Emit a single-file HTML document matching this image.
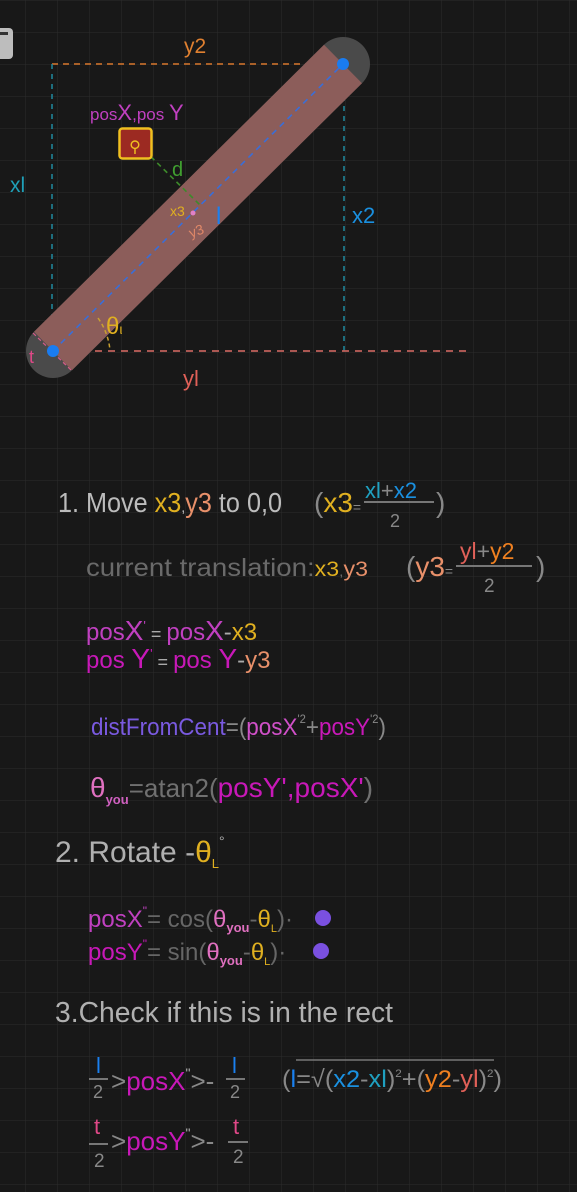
<!DOCTYPE html>
<html><head><meta charset="utf-8"><style>
html,body{margin:0;padding:0;background:#181818;}
svg{display:block;}
text{font-family:"Liberation Sans",sans-serif;}
</style></head><body>
<svg width="577" height="1192" viewBox="0 0 577 1192" xmlns="http://www.w3.org/2000/svg">
<defs>
<pattern id="g" x="25" y="0" width="32" height="32" patternUnits="userSpaceOnUse">
<path d="M0 0V32M0 0H32" stroke="#2c2c2c" stroke-width="1" fill="none"/>
</pattern>
</defs>
<rect width="577" height="1192" fill="#181818"/>
<rect width="577" height="1192" fill="url(#g)"/>
<rect x="-6" y="28" width="19" height="31" rx="4" fill="#bdbdbd"/>
<rect x="-2" y="32" width="10" height="3" fill="#333"/>

<path d="M52 64H343" stroke="#d9782d" stroke-width="1.5" stroke-dasharray="6 5"/>
<path d="M52 64V351" stroke="#1f8aa0" stroke-width="1.5" stroke-dasharray="5 5"/>
<path d="M344 66V351" stroke="#1f8aa0" stroke-width="1.5" stroke-dasharray="5 5"/>
<path d="M56 351H468" stroke="#c0605a" stroke-width="1.8" stroke-dasharray="7 6"/>

<line x1="53" y1="351" x2="343" y2="64" stroke="#4a4a4a" stroke-width="54" stroke-linecap="round"/>
<line x1="53" y1="351" x2="343" y2="64" stroke="#8c5d5a" stroke-width="54"/>
<path d="M33 333L73 372" stroke="#d65a8a" stroke-width="1.2" stroke-dasharray="4 3"/>
<line x1="53" y1="351" x2="343" y2="64" stroke="#3a6ed8" stroke-width="1.6" stroke-dasharray="6 5"/>
<circle cx="53" cy="351" r="6" fill="#1a7cf0"/>
<circle cx="343" cy="64" r="6" fill="#1a7cf0"/>
<circle cx="193" cy="213" r="2.5" fill="#e080c8"/>
<path d="M138 144L200 205" stroke="#3d8a2a" stroke-width="1.6" stroke-dasharray="5 4"/>
<path d="M98 318Q108 332 110 350" stroke="#c9a030" stroke-width="1.5" stroke-dasharray="4 3" fill="none"/>

<rect x="119.5" y="128.5" width="32" height="30" rx="3" fill="#9c2a22" stroke="#f0c020" stroke-width="2.5"/>
<text x="135" y="152" font-size="16" fill="#f0c020" text-anchor="middle">⚲</text>

<text x="184" y="53" font-size="21" fill="#e08030">y2</text>
<text x="90" y="120" font-size="17" fill="#c040c0">pos<tspan font-size="22">X</tspan>,pos <tspan font-size="22">Y</tspan></text>
<text x="10" y="192" font-size="21" fill="#1fa0b8">xl</text>
<text x="172" y="176" font-size="20" fill="#40a030">d</text>
<text x="170" y="216" font-size="14" fill="#e0b020">x3</text>
<text x="191" y="238" font-size="14" fill="#e08868" transform="rotate(-20 191 238)">y3</text>
<text x="216" y="224" font-size="24" fill="#1a80f0">l</text>
<text x="352" y="223" font-size="22" fill="#1a90e0">x2</text>
<text x="106" y="334" font-size="24" fill="#e0b020">θ<tspan font-size="14">ι</tspan></text>
<text x="29" y="363" font-size="18" fill="#e04888">t</text>
<text x="183" y="386" font-size="22" fill="#e06058">yl</text>

<g font-size="28">
<text x="58" y="512" fill="#bcbcbc" textLength="224" lengthAdjust="spacingAndGlyphs">1. Move <tspan fill="#e0b020">x3</tspan><tspan fill="#bcbcbc" font-size="16">,</tspan><tspan fill="#e8906a">y3</tspan> to 0,0</text>
<text x="314" y="512" fill="#888">(<tspan fill="#e0b020">x3</tspan><tspan font-size="14">=</tspan></text>
<text x="365" y="498" font-size="22" fill="#1fa0c0">xl<tspan fill="#888">+</tspan><tspan fill="#1a90e0">x2</tspan></text>
<path d="M364 502H434" stroke="#777" stroke-width="2"/>
<text x="390" y="527" font-size="18" fill="#888">2</text>
<text x="436" y="512" fill="#888">)</text>
</g>
<text x="86" y="576" font-size="25" fill="#6a6a6a" textLength="282" lengthAdjust="spacingAndGlyphs">current translation:<tspan fill="#e0b020" font-size="21">x3</tspan><tspan font-size="14">,</tspan><tspan fill="#e8906a" font-size="21">y3</tspan></text>
<text x="406" y="576" font-size="28" fill="#888">(<tspan fill="#e8906a">y3</tspan><tspan font-size="14">=</tspan></text>
<text x="460" y="559" font-size="23" fill="#e06058">yl<tspan fill="#888">+</tspan><tspan fill="#f08020">y2</tspan></text>
<path d="M456 566H532" stroke="#777" stroke-width="2"/>
<text x="484" y="592" font-size="19" fill="#888">2</text>
<text x="536" y="576" font-size="28" fill="#888">)</text>

<text x="86" y="640" font-size="24" fill="#c040c0">pos<tspan font-size="28">X</tspan><tspan font-size="13" dy="-10">'</tspan><tspan dy="10" fill="#aaa" font-size="18"> = </tspan>pos<tspan font-size="28">X</tspan><tspan fill="#aaa">-</tspan><tspan fill="#e0b020">x3</tspan></text>
<text x="86" y="668" font-size="24" fill="#c818b8">pos <tspan font-size="28">Y</tspan><tspan font-size="13" dy="-10">'</tspan><tspan dy="10" fill="#aaa" font-size="18"> = </tspan>pos <tspan font-size="28">Y</tspan><tspan fill="#aaa">-</tspan><tspan fill="#e8906a">y3</tspan></text>

<text x="91" y="735" font-size="24" fill="#7a5ae0" textLength="295" lengthAdjust="spacingAndGlyphs">distFromCent<tspan fill="#888">=(</tspan><tspan fill="#d050c8">posX</tspan><tspan fill="#888" font-size="12" dy="-12">'2</tspan><tspan dy="12" fill="#888">+</tspan><tspan fill="#c818b8">posY</tspan><tspan fill="#888" font-size="12" dy="-12">'2</tspan><tspan dy="12" fill="#888">)</tspan></text>

<text x="90" y="797" font-size="28" fill="#e070c0">θ<tspan font-size="13" dy="7" font-weight="bold" fill="#d060c0">you</tspan><tspan dy="-7" fill="#707070" font-size="26">=atan2(</tspan><tspan fill="#c818b8">posY',posX'</tspan><tspan fill="#707070">)</tspan></text>

<text x="55" y="862" font-size="30" fill="#b0b0b0">2. Rotate -<tspan fill="#e0b020">θ</tspan><tspan fill="#e0b020" font-size="13" dy="6">L</tspan><tspan font-size="14" dy="-22">°</tspan></text>
<text x="88" y="927" font-size="24" fill="#c040c0">posX<tspan font-size="12" dy="-12">"</tspan><tspan dy="12" fill="#666">= cos(</tspan><tspan fill="#e070c0">θ</tspan><tspan fill="#e070c0" font-size="13" dy="5" font-weight="bold">you</tspan><tspan dy="-5" fill="#666">-</tspan><tspan fill="#e0b020">θ</tspan><tspan fill="#e0b020" font-size="11" dy="5">L</tspan><tspan dy="-5" fill="#666">)·</tspan></text>
<circle cx="323" cy="918" r="8" fill="#7a50e0"/>
<text x="88" y="960" font-size="24" fill="#c818b8">posY<tspan font-size="12" dy="-12">"</tspan><tspan dy="12" fill="#666">= sin(</tspan><tspan fill="#e070c0">θ</tspan><tspan fill="#e070c0" font-size="13" dy="5" font-weight="bold">you</tspan><tspan dy="-5" fill="#666">-</tspan><tspan fill="#e0b020">θ</tspan><tspan fill="#e0b020" font-size="11" dy="5">L</tspan><tspan dy="-5" fill="#666">)·</tspan></text>
<circle cx="321" cy="951" r="8" fill="#7a50e0"/>

<text x="55" y="1022" font-size="29" fill="#b0b0b0" textLength="338" lengthAdjust="spacingAndGlyphs">3.Check if this is in the rect</text>
<text x="96" y="1073" font-size="22" fill="#1a80f0">l</text>
<path d="M89 1079H108" stroke="#777" stroke-width="2"/>
<text x="93" y="1098" font-size="18" fill="#888">2</text>
<text x="111" y="1090" font-size="26" fill="#c818b8"><tspan fill="#888">&gt;</tspan>posX<tspan font-size="14" dy="-12" fill="#aaa">"</tspan><tspan dy="12" fill="#888">&gt;-</tspan></text>
<text x="232" y="1073" font-size="22" fill="#1a80f0">l</text>
<path d="M226 1079H245" stroke="#777" stroke-width="2"/>
<text x="230" y="1098" font-size="18" fill="#888">2</text>
<text x="282" y="1087" font-size="24" fill="#888" textLength="220" lengthAdjust="spacingAndGlyphs">(<tspan fill="#1a80f0">l</tspan>=√(<tspan fill="#1a90e0">x2</tspan>-<tspan fill="#1fa0c0">xl</tspan>)<tspan font-size="11" dy="-10">2</tspan><tspan dy="10">+(</tspan><tspan fill="#f08020">y2</tspan>-<tspan fill="#e06058">yl</tspan>)<tspan font-size="11" dy="-10">2</tspan><tspan dy="10">)</tspan></text>
<path d="M296 1060H494" stroke="#777" stroke-width="1.5"/>
<text x="94" y="1134" font-size="22" fill="#e04888">t</text>
<path d="M89 1144H108" stroke="#777" stroke-width="2"/>
<text x="94" y="1167" font-size="19" fill="#888">2</text>
<text x="111" y="1150" font-size="26" fill="#c818b8"><tspan fill="#888">&gt;</tspan>posY<tspan font-size="14" dy="-12" fill="#aaa">"</tspan><tspan dy="12" fill="#888">&gt;-</tspan></text>
<text x="233" y="1134" font-size="22" fill="#e04888">t</text>
<path d="M228 1142H248" stroke="#777" stroke-width="2"/>
<text x="233" y="1163" font-size="19" fill="#888">2</text>
</svg>
</body></html>
